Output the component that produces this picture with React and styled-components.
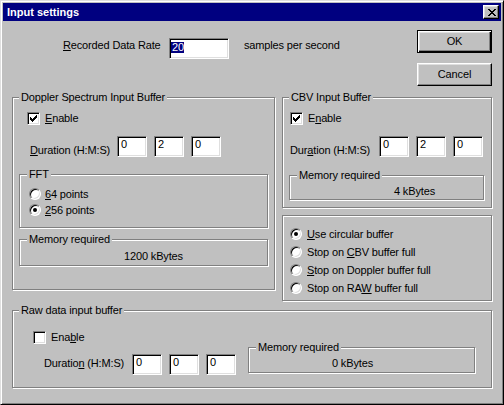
import React from 'react';
import styled, { createGlobalStyle } from 'styled-components';

const GlobalStyle = createGlobalStyle`
  html, body { margin: 0; padding: 0; background: #c0c0c0; }
  body {
    font-family: "Liberation Sans", Arial, sans-serif;
    font-size: 11px;
    letter-spacing: -0.15px;
    color: #000;
  }
  * { box-sizing: border-box; }
  u { text-decoration: underline; text-underline-offset: 1px; }
`;

const Window = styled.div`
  width: 504px;
  height: 405px;
  background: #c0c0c0;
  border: 1px solid;
  border-color: #dfdfdf #000 #000 #dfdfdf;
  box-shadow: inset 1px 1px #fff, inset -1px -1px #808080;
  padding: 2px;
  display: flex;
  flex-direction: column;
`;

const TitleBar = styled.div`
  height: 18px;
  flex: none;
  background: #000080;
  color: #fff;
  font-weight: bold;
  letter-spacing: 0;
  display: flex;
  align-items: center;
  justify-content: space-between;
  padding: 0 2px 0 4px;
  line-height: 13px;
`;

const RaisedMixin = `
  background: #c0c0c0;
  border: 1px solid;
  border-color: #fff #000 #000 #fff;
  box-shadow: inset -1px -1px #808080, inset 1px 1px #dfdfdf;
`;

const CloseButton = styled.div`
  ${RaisedMixin}
  width: 16px;
  height: 14px;
  display: flex;
  align-items: center;
  justify-content: center;
  padding-left: 1px;
`;

const Content = styled.div`
  padding: 0 9px;
  display: flex;
  flex-direction: column;
`;

const Top = styled.div`
  height: 76px;
  display: flex;
  justify-content: space-between;
`;

const RateRow = styled.div`
  margin: 17px 0 0 51px;
  display: flex;
  align-items: flex-start;
`;

const Label = styled.span`
  display: block;
  flex: none;
  line-height: 13px;
  white-space: nowrap;
  width: ${p => (p.$w ? `${p.$w}px` : 'auto')};
  margin-top: ${p => p.$mt || 0}px;
  margin-left: ${p => p.$ml || 0}px;
`;

const Edit = styled.div`
  flex: none;
  width: ${p => p.$w}px;
  height: 21px;
  background: #fff;
  border: 1px solid;
  border-color: #808080 #fff #fff #808080;
  box-shadow: inset 1px 1px #000, inset -1px -1px #dfdfdf;
  padding: ${p => p.$pad || '1px 3px'};
  line-height: 12px;
  white-space: nowrap;
`;

const Selected = styled.span`
  display: inline-block;
  background: #000080;
  color: #fff;
  line-height: 11px;
  padding: 0 0 0 1px;
`;

const ButtonColumn = styled.div`
  padding-top: 9px;
  display: flex;
  flex-direction: column;
  gap: 10px;
`;

const Button = styled.div`
  ${RaisedMixin}
  width: 75px;
  height: 23px;
  display: flex;
  align-items: center;
  justify-content: center;
  line-height: 13px;
  ${p =>
    p.$default &&
    `
    border-color: #000;
    box-shadow: inset 1px 1px #fff, inset -1px -1px #000, inset -2px -2px #808080, inset 2px 2px #dfdfdf;
  `}
`;

const MainGrid = styled.div`
  display: grid;
  grid-template-columns: 263px 210px;
  column-gap: 7px;
  align-items: start;
`;

const RightColumn = styled.div`
  display: flex;
  flex-direction: column;
  gap: 7px;
`;

const Group = styled.div`
  position: relative;
  flex: none;
  width: ${p => p.$w}px;
  height: ${p => p.$h}px;
  border: 1px solid #808080;
  box-shadow: inset 1px 1px #fff, 1px 1px #fff;
  margin-top: ${p => p.$mt || 0}px;
  margin-left: ${p => p.$ml || 0}px;
  padding-top: ${p => p.$pt || 0}px;
  padding-left: ${p => p.$pl || 0}px;
  display: flex;
  flex-direction: ${p => (p.$row ? 'row' : 'column')};
  align-items: flex-start;
`;

const Caption = styled.span`
  position: absolute;
  top: -7px;
  left: ${p => p.$left ?? 6}px;
  padding: 0 2px;
  background: #c0c0c0;
  line-height: 13px;
  white-space: nowrap;
`;

const MemoryValue = styled.div`
  width: 100%;
  text-align: center;
  line-height: 13px;
  padding-top: ${p => p.$pt}px;
  padding-left: ${p => Math.max(0, p.$shift * 2)}px;
  padding-right: ${p => Math.max(0, -p.$shift * 2)}px;
`;

const CheckRow = styled.div`
  display: flex;
  align-items: center;
  gap: 5px;
  height: 13px;
  line-height: 13px;
  margin-left: ${p => p.$ml || 0}px;
`;

const CheckBox = styled.div`
  width: 13px;
  height: 13px;
  flex: none;
  background: #fff;
  border: 1px solid;
  border-color: #808080 #fff #fff #808080;
  box-shadow: inset 1px 1px #000, inset -1px -1px #dfdfdf;
  display: flex;
  align-items: center;
  justify-content: center;
`;

const DurationRow = styled.div`
  display: flex;
  align-items: flex-start;
  gap: 7px;
  margin-top: ${p => p.$mt || 0}px;
  margin-left: ${p => p.$ml || 0}px;
`;

const RadioList = styled.div`
  display: flex;
  flex-direction: column;
`;

const RadioRow = styled.div`
  display: flex;
  align-items: center;
  gap: ${p => p.$gap}px;
  height: ${p => p.$h}px;
  line-height: 13px;
  white-space: nowrap;
`;

const Radio = styled.div`
  position: relative;
  width: 12px;
  height: 12px;
  flex: none;
  border-radius: 50%;
  background: #fff;
  border: 1px solid;
  border-color: #808080 #fff #fff #808080;
  box-shadow: inset 1px 1px #000, inset -1px -1px #dfdfdf;
  &::after {
    content: '';
    display: ${p => (p.$on ? 'block' : 'none')};
    position: absolute;
    left: 3px;
    top: 3px;
    width: 4px;
    height: 4px;
    border-radius: 50%;
    background: #000;
  }
`;

const RawLeft = styled.div`
  margin-left: 20px;
  padding-top: 20px;
  display: flex;
  flex-direction: column;
  align-items: flex-start;
`;

const CheckMark = () => (
  <svg width="7" height="7" viewBox="0 0 7 7" shapeRendering="crispEdges">
    <path
      fill="#000"
      d="M6 0h1v1H6zM5 1h2v1H5zM0 2h1v1H0zM4 2h3v1H4zM0 3h2v1H0zM3 3h3v1H3zM0 4h5v1H0zM1 5h3v1H1zM2 6h1v1H2z"
    />
  </svg>
);

const CloseX = () => (
  <svg width="8" height="7" viewBox="0 0 8 7" shapeRendering="crispEdges">
    <path
      fill="#000"
      d="M0 0h2v1H0zM6 0h2v1H6zM1 1h2v1H1zM5 1h2v1H5zM2 2h4v1H2zM3 3h2v1H3zM2 4h4v1H2zM1 5h2v1H1zM5 5h2v1H5zM0 6h2v1H0zM6 6h2v1H6z"
    />
  </svg>
);

const Check = ({ checked, children, ml }) => (
  <CheckRow $ml={ml}>
    <CheckBox>{checked && <CheckMark />}</CheckBox>
    <span>{children}</span>
  </CheckRow>
);

const Duration = ({ label, values, mt, ml, labelW, labelTop }) => (
  <DurationRow $mt={mt} $ml={ml}>
    <Label $w={labelW - 7} $mt={labelTop}>
      {label}
    </Label>
    {values.map((v, i) => (
      <Edit key={i} $w={30}>
        {v}
      </Edit>
    ))}
  </DurationRow>
);

const Memory = ({ w, h, mt, ml, pt, shift, value }) => (
  <Group $w={w} $h={h} $mt={mt} $ml={ml}>
    <Caption $left={7}>Memory required</Caption>
    <MemoryValue $pt={pt} $shift={shift}>
      {value}
    </MemoryValue>
  </Group>
);

export default function App() {
  return (
    <>
      <GlobalStyle />
      <Window>
        <TitleBar>
          <span>Input settings</span>
          <CloseButton>
            <CloseX />
          </CloseButton>
        </TitleBar>
        <Content>
          <Top>
            <RateRow>
              <Label $w={106} $mt={1}>
                <u>R</u>ecorded Data Rate
              </Label>
              <Edit $w={60} $pad="2px 0 0 1px">
                <Selected>20</Selected>
              </Edit>
              <Label $mt={1} $ml={15}>
                samples per second
              </Label>
            </RateRow>
            <ButtonColumn>
              <Button $default>OK</Button>
              <Button>Cancel</Button>
            </ButtonColumn>
          </Top>

          <MainGrid>
            <Group $w={263} $h={193} $pt={14} $pl={6}>
              <Caption>Doppler Spectrum Input Buffer</Caption>
              <Check checked ml={8}>
                <u>E</u>nable
              </Check>
              <Duration
                label={<><u>D</u>uration (H:M:S)</>}
                values={['0', '2', '0']}
                mt={11}
                ml={11}
                labelW={87}
                labelTop={8}
              />
              <Group $w={249} $h={54} $mt={17} $pt={11} $pl={9}>
                <Caption $left={7}>FFT</Caption>
                <RadioList>
                  <RadioRow $gap={4} $h={16}>
                    <Radio />
                    <span>
                      <u>6</u>4 points
                    </span>
                  </RadioRow>
                  <RadioRow $gap={4} $h={16}>
                    <Radio $on />
                    <span>
                      <u>2</u>56 points
                    </span>
                  </RadioRow>
                </RadioList>
              </Group>
              <Memory w={249} h={27} mt={11} pt={10} shift={10} value="1200 kBytes" />
            </Group>

            <RightColumn>
              <Group $w={210} $h={111} $pt={14} $pl={6}>
                <Caption>CBV Input Buffer</Caption>
                <Check checked ml={1}>
                  E<u>n</u>able
                </Check>
                <Duration
                  label={<>Dur<u>a</u>tion (H:M:S)</>}
                  values={['0', '2', '0']}
                  mt={11}
                  ml={1}
                  labelW={89}
                  labelTop={8}
                />
                <Memory w={195} h={25} mt={18} ml={0} pt={9} shift={28} value="4 kBytes" />
              </Group>

              <Group $w={210} $h={86} $pt={9} $pl={7}>
                <RadioList>
                  <RadioRow $gap={5} $h={18}>
                    <Radio $on />
                    <span>
                      <u>U</u>se circular buffer
                    </span>
                  </RadioRow>
                  <RadioRow $gap={5} $h={18}>
                    <Radio />
                    <span>
                      Stop on <u>C</u>BV buffer full
                    </span>
                  </RadioRow>
                  <RadioRow $gap={5} $h={18}>
                    <Radio />
                    <span>
                      <u>S</u>top on Doppler buffer full
                    </span>
                  </RadioRow>
                  <RadioRow $gap={5} $h={18}>
                    <Radio />
                    <span>
                      Stop on RA<u>W</u> buffer full
                    </span>
                  </RadioRow>
                </RadioList>
              </Group>
            </RightColumn>
          </MainGrid>

          <Group $w={480} $h={78} $mt={9} $row>
            <Caption>Raw data input buffer</Caption>
            <RawLeft>
              <Check>
                Ena<u>b</u>le
              </Check>
              <Duration
                label={<>Duratio<u>n</u> (H:M:S)</>}
                values={['0', '0', '0']}
                mt={10}
                ml={11}
                labelW={88}
                labelTop={3}
              />
            </RawLeft>
            <Memory w={227} h={26} mt={36} ml={12} pt={9} shift={-9} value="0 kBytes" />
          </Group>
        </Content>
      </Window>
    </>
  );
}
